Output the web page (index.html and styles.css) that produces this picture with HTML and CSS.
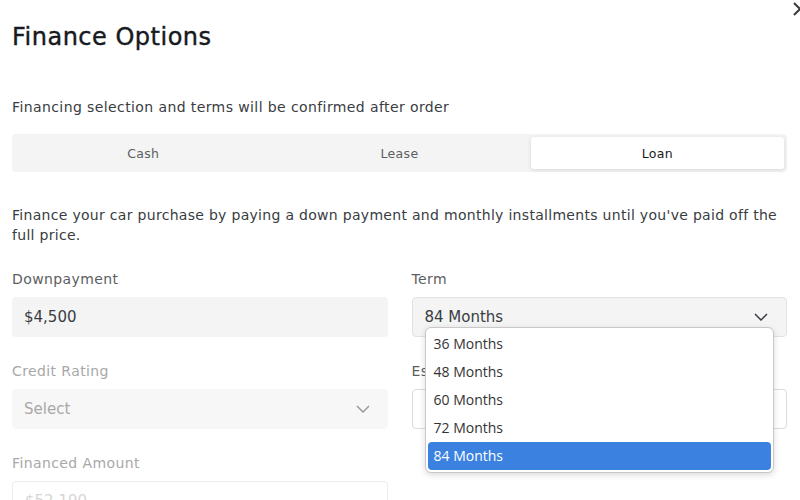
FILE: index.html
```html
<!DOCTYPE html>
<html lang="en">
<head>
    <meta charset="UTF-8">
    <meta name="viewport" content="width=device-width, initial-scale=1.0">
    <title>Finance Options</title>
    <link rel="stylesheet" href="styles.css">
</head>
<body>
    <div class="modal">
        <button class="close-btn" aria-label="Close">
            <svg width="14" height="14" viewBox="0 0 14 14">
                <path d="M1 1 L13 13 M13 1 L1 13" stroke="#393c41" stroke-width="2" fill="none"/>
            </svg>
        </button>

        <h1>Finance Options</h1>

        <p class="notice">Financing selection and terms will be confirmed after order</p>

        <!-- Payment type tabs -->
        <div class="tabs">
            <button class="tab">Cash</button>
            <button class="tab">Lease</button>
            <button class="tab active">Loan</button>
        </div>

        <p class="intro">Finance your car purchase by paying a down payment and monthly installments until you've paid off the full price.</p>

        <div class="form-grid">
            <div class="field">
                <label>Downpayment</label>
                <div class="input filled">$4,500</div>
            </div>

            <div class="field term-field">
                <label>Term</label>
                <div class="input select filled bordered">
                    84 Months
                    <svg class="chevron" width="14" height="8" viewBox="0 0 14 8">
                        <path d="M1 1 L7 7 L13 1" stroke="#393c41" stroke-width="1.5" fill="none"/>
                    </svg>
                </div>

                <!-- Open dropdown -->
                <ul class="dropdown">
                    <li>36 Months</li>
                    <li>48 Months</li>
                    <li>60 Months</li>
                    <li>72 Months</li>
                    <li class="selected">84 Months</li>
                </ul>
            </div>

            <div class="field disabled">
                <label>Credit Rating</label>
                <div class="input select muted">
                    Select
                    <svg class="chevron" width="14" height="8" viewBox="0 0 14 8">
                        <path d="M1 1 L7 7 L13 1" stroke="#9a9a9a" stroke-width="1.5" fill="none"/>
                    </svg>
                </div>
            </div>

            <div class="field">
                <label>Est. Payment</label>
                <div class="input outline"></div>
            </div>

            <div class="field disabled">
                <label>Financed Amount</label>
                <div class="input outline">$52,190</div>
            </div>
        </div>
    </div>
</body>
</html>
```

FILE: styles.css
```css
:root {
    --text-color: #171a20;
    --body-color: #393c41;
    --label-color: #5c5e62;
    --muted-color: #a8a8a8;
    --field-bg: #f4f4f4;
    --blue: #3b82e0;
}

html, body {
    overflow: hidden;
}

body {
    margin: 0;
    font-family: 'DejaVu Sans', 'Liberation Sans', sans-serif;
    color: var(--body-color);
    background: white;
}

.modal {
    position: relative;
    padding: 22px 13px 0 12px;
}

.close-btn {
    position: absolute;
    top: 2px;
    left: 793px;
    padding: 0;
    border: none;
    background: none;
}

h1 {
    margin: 0;
    font-size: 24px;
    line-height: 30px;
    font-weight: normal;
    letter-spacing: 0.5px;
    color: var(--text-color);
    -webkit-text-stroke: 0.4px var(--text-color);
}

.notice {
    margin: 45px 0 0;
    font-size: 14px;
    line-height: 20px;
    letter-spacing: 0.4px;
}

.tabs {
    display: grid;
    grid-template-columns: repeat(3, 1fr);
    margin-top: 17px;
    padding: 3px;
    height: 38px;
    box-sizing: border-box;
    background: var(--field-bg);
    border-radius: 4px;
}

.tab {
    border: none;
    background: none;
    font-family: inherit;
    font-size: 12.5px;
    letter-spacing: 0.3px;
    color: var(--label-color);
    border-radius: 3px;
}

.tab.active {
    background: white;
    color: var(--text-color);
    margin-left: 3px;
    box-shadow: 0 1px 4px rgba(0,0,0,0.12);
}

.intro {
    margin: 33px -12px 0 0;
    font-size: 14px;
    line-height: 20px;
    letter-spacing: 0.3px;
}

.form-grid {
    display: grid;
    grid-template-columns: 1fr 1fr;
    column-gap: 24px;
    row-gap: 24px;
    margin-top: 24px;
}

.field {
    position: relative;
}

.field label {
    display: block;
    font-size: 14px;
    line-height: 20px;
    letter-spacing: 0.4px;
    margin-bottom: 8px;
    color: var(--label-color);
}

.input {
    display: flex;
    align-items: center;
    justify-content: space-between;
    height: 40px;
    box-sizing: border-box;
    padding: 0 12px;
    border-radius: 4px;
    font-size: 15px;
    color: var(--body-color);
}

.filled {
    background: var(--field-bg);
}

.bordered {
    border: 1px solid #e2e2e2;
}

.outline {
    border: 1px solid #dcdcdc;
}

.chevron {
    margin-right: 6px;
}

.disabled label,
.disabled .input {
    color: var(--muted-color);
}

.muted {
    background: #f7f7f7;
}

.disabled .outline {
    border-color: #ececec;
    color: #d6d6d6;
}

.dropdown {
    position: absolute;
    z-index: 10;
    top: 58px;
    left: 13px;
    width: 349px;
    margin: 0;
    padding: 2px;
    list-style: none;
    box-sizing: border-box;
    background: white;
    border: 1px solid #c8c8c8;
    border-radius: 6px;
    box-shadow: 0 2px 6px rgba(0,0,0,0.15);
    font-family: 'Open Sans', sans-serif;
    font-size: 14px;
    color: #333;
}

.dropdown li {
    height: 28px;
    line-height: 28px;
    padding-left: 6px;
}

.dropdown li.selected {
    background: var(--blue);
    color: white;
    border-radius: 4px;
}
```
